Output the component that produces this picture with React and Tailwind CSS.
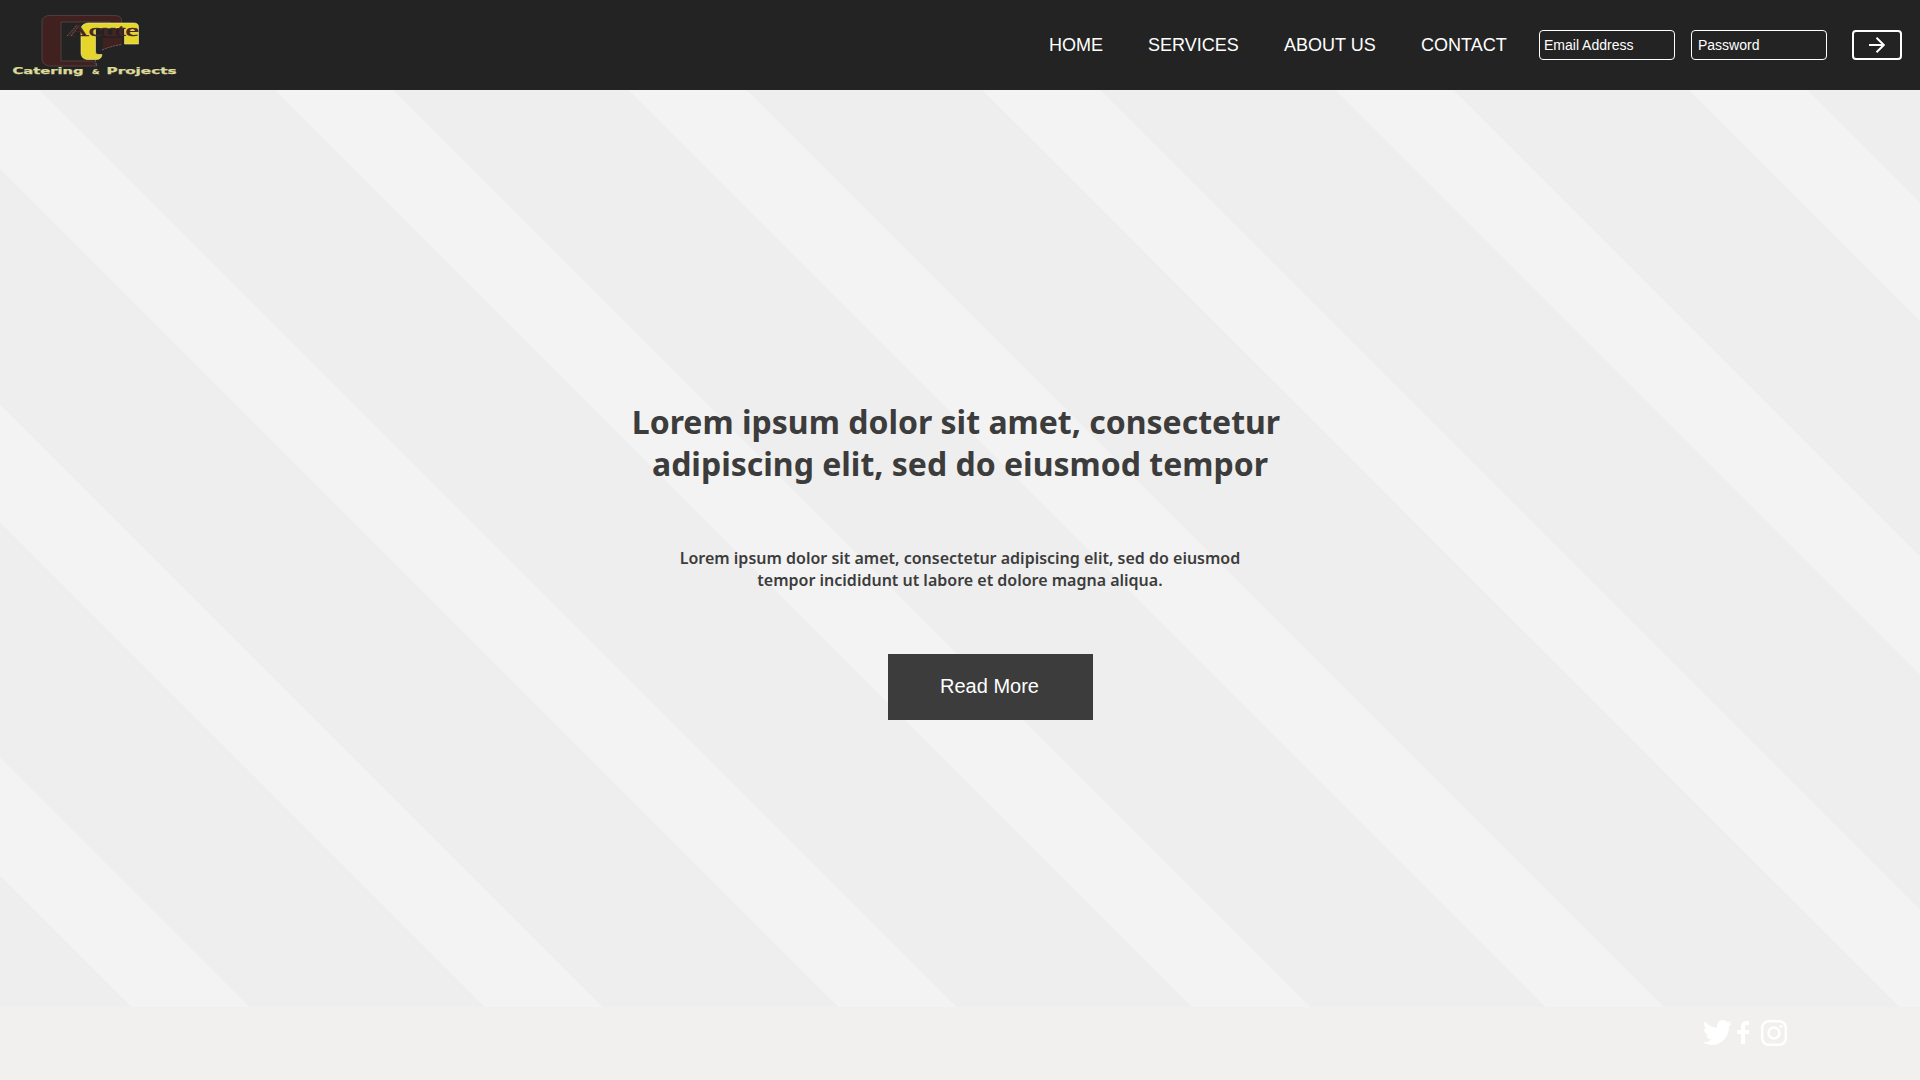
const navItems = [
  { label: 'HOME', cls: 'w-[54px] mr-[45px]' },
  { label: 'SERVICES', cls: 'w-[91px] mr-[45px]' },
  { label: 'ABOUT US', cls: 'w-[92px] mr-[45px]' },
  { label: 'CONTACT', cls: 'w-[86px] mr-[32px]' },
];

function Logo() {
  return (
    <svg className="ml-2 h-[90px] w-[176px] shrink-0" viewBox="8 0 176 90">
      <path fill="#412020" stroke="#6a5c5c" strokeWidth="0.5" d="M48 15.500H114Q121.500 15.500 121.500 20V26H110V22H61V61H93L97 66H48Q42 64 42 60V21Q42 17 48 15.500Z" />
      <path fill="#412020" d="M103 38H122V45Q110 46 103 50Z" />
      <path fill="#e6d62c" stroke="#f0ebb0" strokeWidth="0.6" d="M88 23H134Q138.500 23 138.500 27V44H124.500V28H97Q95.500 28 95.500 30V52Q95.500 54.500 98 54.500H102Q101.500 59.500 96 59.500H87Q81 58.500 81 53V29Q81 24 88 23Z" />
      <path fill="none" stroke="#8d8484" strokeWidth="0.7" strokeDasharray="2 1" d="M102 50Q111 46 122 44.500M95 60L97 66" />
      <g fill="#4a2424" fontFamily="Liberation Serif, serif" fontSize="17">
        <text x="67" y="36" textLength="72" lengthAdjust="spacingAndGlyphs" stroke="#4a2424" strokeWidth="0.5">Acute</text>
      </g>
      <path fill="none" stroke="#8d8484" strokeWidth="0.6" strokeDasharray="2 1" d="M67 36L77 25M71 36L78 27" />
      <g fill="#dcd99a" stroke="#dcd99a" strokeWidth="0.25" fontFamily="DejaVu Sans, sans-serif" fontWeight="700" fontSize="8.300">
        <text x="12.500" y="73.500" textLength="71" lengthAdjust="spacingAndGlyphs">Catering</text>
        <text x="92" y="73.500" textLength="7.500" lengthAdjust="spacingAndGlyphs" fontSize="6.500">&amp;</text>
        <text x="106.500" y="73.500" textLength="70" lengthAdjust="spacingAndGlyphs">Projects</text>
      </g>
    </svg>
  );
}

export default function App() {
  return (
    <div className="flex h-[1080px] w-[1920px] flex-col overflow-hidden bg-[#f1f0ee] font-['Liberation_Sans',Arial,sans-serif]">
      <header className="flex h-[90px] shrink-0 items-center bg-[#232323] text-white">
        <Logo />
        <nav className="ml-auto flex text-[18px] leading-[20px]">
          {navItems.map((n) => (
            <a key={n.label} className={`whitespace-nowrap ${n.cls}`}>{n.label}</a>
          ))}
        </nav>
        <div className="mr-4 flex h-[30px] w-[136px] items-center rounded border border-white pl-[4px] text-[14px]">Email Address</div>
        <div className="mr-[25px] flex h-[30px] w-[136px] items-center rounded border border-white pl-[6px] text-[14px]">Password</div>
        <button className="mr-[18px] flex h-[30px] w-[50px] items-center justify-center rounded-[4px] border-2 border-white">
          <svg className="h-4 w-4" viewBox="0 0 16 16" fill="none" stroke="white" strokeWidth="2">
            <path d="M0 8H15M7.500 0.700L14.800 8L7.500 15.300" />
          </svg>
        </button>
      </header>
      <main className="flex h-[917px] shrink-0 flex-col items-center bg-[repeating-linear-gradient(45deg,#eeeeee_0px,#eeeeee_92.6px,#f3f3f3_93.2px,#f3f3f3_176px,#eeeeee_176.6px,#eeeeee_250px)] text-[#3c3c3c]">
        <h1 className="mt-[311px] whitespace-pre text-center font-['Noto_Sans',sans-serif] text-[32px] leading-[42px] font-bold">
          <span className="block pr-2">Lorem ipsum dolor sit amet, consectetur</span>
          <span className="block">adipiscing elit, sed do eiusmod tempor</span>
        </h1>
        <p className="mt-[62px] text-center font-['Noto_Sans',sans-serif] text-[16px] leading-[22px] font-semibold">
          Lorem ipsum dolor sit amet, consectetur adipiscing elit, sed do eiusmod<br />
          tempor incididunt ut labore et dolore magna aliqua.
        </p>
        <button className="mt-[63px] ml-[61px] h-[66px] w-[205px] bg-[#3c3c3c] pr-[2px] pb-[2px] text-[20px] text-white">Read More</button>
      </main>
      <footer className="flex items-start justify-end pt-[13px] pr-[133px] text-white">
        <svg className="h-[25px] w-[29px]" viewBox="0 0 24 19.500" preserveAspectRatio="none" fill="currentColor">
          <path transform="translate(0 -2.250)" d="M23.953 4.570a10 10 0 01-2.825.775 4.958 4.958 0 002.163-2.723c-.951.555-2.005.959-3.127 1.184a4.920 4.920 0 00-8.384 4.482C7.690 8.095 4.067 6.130 1.640 3.162a4.822 4.822 0 00-.666 2.475c0 1.710.870 3.213 2.188 4.096a4.904 4.904 0 01-2.228-.616v.060a4.923 4.923 0 003.946 4.827 4.996 4.996 0 01-2.212.085 4.936 4.936 0 004.604 3.417 9.867 9.867 0 01-6.102 2.105c-.390 0-.779-.023-1.170-.067a13.995 13.995 0 007.557 2.209c9.053 0 13.998-7.496 13.998-13.985 0-.210 0-.420-.015-.630A9.935 9.935 0 0024 4.590z" />
        </svg>
        <svg className="mt-px ml-[5px] h-[23px] w-3" viewBox="0 0 12 23" fill="currentColor">
          <path d="M4 23V13H0V9H4V6Q4 0 9.500 0H12V4H10Q8 4 8 6V9H12V13H8V23Z" />
        </svg>
        <svg className="ml-3 h-[26px] w-[26px]" viewBox="0 0 26 26" fill="none" stroke="currentColor" strokeWidth="2.400">
          <rect x="1.200" y="1.200" width="23.600" height="23.600" rx="6.500" />
          <circle cx="13" cy="13" r="5.500" />
          <circle cx="20" cy="6.200" r="1.500" fill="currentColor" stroke="none" />
        </svg>
      </footer>
    </div>
  );
}
